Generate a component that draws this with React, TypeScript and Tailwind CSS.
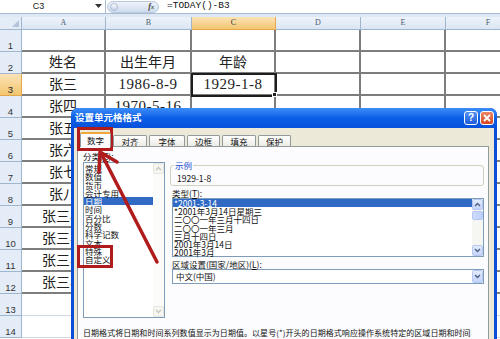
import React from 'react';

const colW = ['w-[84px]', 'w-[86px]', 'w-[84px]', 'w-[85px]', 'w-[85px]', 'w-[85px]'];
const colNames = ['A', 'B', 'C', 'D', 'E', 'F'];

const sheet: string[][] = [
    ['', '', ''],
    ['姓名', '出生年月', '年龄'],
    ['张三', '1986-8-9', '1929-1-8'],
    ['张四', '1970-5-16', ''],
    ['张五', '', ''],
    ['张六', '', ''],
    ['张七', '', ''],
    ['张八', '', ''],
    ['张三丰', '', ''],
    ['张三丰', '', ''],
    ['张三丰', '', ''],
    ['张三丰', '', ''],
    ['', '', ''],
    ['', '', ''],
];

const categories = ['常规', '数值', '货币', '会计专用', '日期', '时间', '百分比', '分数', '科学记数', '文本', '特殊', '自定义'];
const types = ['*2001-3-14', '*2001年3月14日星期三', '二〇〇一年三月十四日', '二〇〇一年三月', '三月十四日', '2001年3月14日', '2001年3月'];

export default function App() {
    return (
        <div className="relative w-[500px] h-[339px] overflow-hidden bg-white font-['Liberation_Sans','Noto_Sans_CJK_SC',sans-serif]">

            {/* --- FORMULA BAR --- */}
            <div className="h-[14px] flex items-center border-b border-[#a7bad4] bg-white">
                <div className="w-[106px] h-full flex items-center border-r border-[#a7bad4] relative">
                    <span className="flex-1 text-center text-[9px] text-[#222] pr-[18px]">C3</span>
                    <svg width="7" height="5" viewBox="0 0 7 5" className="mr-[3px]"><path d="M0 0 L7 0 L3.5 4 Z" fill="#333" /></svg>
                </div>
                <div className="w-[52px] h-[12px] mx-[1px] rounded-full bg-linear-to-b from-[#eef3fa] to-[#cfdcee] border border-[#b8c8de] flex items-center px-[2px]">
                    <div className="w-[8px] h-[8px] rounded-full bg-linear-to-b from-white to-[#c2d1e6] border border-[#aabcd6]" />
                    <span className="ml-auto mr-[2px] text-[8px] italic font-bold text-[#444] font-['Liberation_Serif',serif]">f<span className="text-[6px]">x</span></span>
                </div>
                <span className="ml-[7px] text-[9.5px] text-[#111] font-['Liberation_Mono',monospace]">=TODAY()-B3</span>
            </div>
            <div className="h-[3px] bg-[#dfe8f5]" />

            {/* --- COLUMN HEADERS --- */}
            <div className="flex h-[13px]">
                <div className="w-[22px] shrink-0 bg-[#e4ecf7] border-r border-b border-[#9eb6ce] relative">
                    <svg width="7" height="7" viewBox="0 0 7 7" className="absolute right-[2px] bottom-[2px]"><path d="M7 0 L7 7 L0 7 Z" fill="#b4c4d9" /></svg>
                </div>
                {colNames.map((c, i) => (
                    <div
                        key={c}
                        className={`${colW[i]} shrink-0 flex items-center justify-center text-[8px] font-['Liberation_Serif',serif] border-r border-b ${
                            c === 'C'
                                ? 'bg-linear-to-b from-[#fbe3b6] to-[#f3c56e] border-[#e3a84d] text-[#333]'
                                : 'bg-linear-to-b from-[#eef3fa] to-[#dbe5f3] border-[#9eb6ce] text-[#4b5b70]'
                        }`}
                    >
                        {c}
                    </div>
                ))}
            </div>

            {/* --- ROWS --- */}
            {sheet.map((row, r) => (
                <SheetRow key={r} n={r + 1} cells={row} />
            ))}

            {/* --- FORMAT CELLS DIALOG --- */}
            <div className="absolute left-[71px] top-[108px] w-[426px] h-[240px] rounded-t-[7px] bg-[#0b4fd6] flex flex-col font-['Noto_Sans_CJK_SC',sans-serif]">
                <div className="h-[20px] shrink-0 rounded-t-[7px] bg-linear-to-b from-[#3d8df8] via-[#0b5ee6] to-[#0751dc] flex items-center pl-[4px] pr-[3px]">
                    <span className="text-white font-bold text-[9.5px] leading-none">设置单元格格式</span>
                    <div className="ml-auto flex gap-[2px]">
                        <div className="w-[14px] h-[14px] rounded-[3px] border border-white bg-linear-to-b from-[#5592f6] to-[#1f5bd6] flex items-center justify-center text-white text-[10px] font-bold leading-none font-['Liberation_Sans',sans-serif]">?</div>
                        <div className="w-[14px] h-[14px] rounded-[3px] border border-white bg-linear-to-b from-[#ec8463] to-[#d4471f] flex items-center justify-center">
                            <svg width="8" height="8" viewBox="0 0 8 8"><path d="M1 1 L7 7 M7 1 L1 7" stroke="white" strokeWidth="1.8" /></svg>
                        </div>
                    </div>
                </div>

                <div className="flex-1 mx-[3px] bg-[#ece9d8] flex flex-col pt-[4px]">
                    {/* tabs */}
                    <div className="flex items-end gap-[2px] ml-[6px] h-[14px] relative z-10">
                        <div className="w-[31px] h-[15px] -mb-[1px] bg-[#fcfcfe] border-x border-[#919b9c] border-t-2 border-t-[#f2a73c] rounded-t-[2px] flex items-center justify-center text-[8.5px] text-[#111]">数字</div>
                        <Tab w="w-[34px]" label="对齐" />
                        <Tab w="w-[36px]" label="字体" />
                        <Tab w="w-[33px]" label="边框" />
                        <Tab w="w-[34px]" label="填充" />
                        <Tab w="w-[33px]" label="保护" />
                    </div>

                    {/* panel */}
                    <div className="flex-1 ml-[3px] mr-[5px] bg-[#fcfcfe] border border-[#919b9c] pt-[4px] pl-[5px] text-[8.5px] text-[#111]">
                        <div className="flex">
                            <div className="w-[82px] shrink-0">
                                <div className="h-[11px] leading-[11px]">分类(<span className="underline">C</span>):</div>
                                <div className="h-[156px] bg-white border border-[#7f9db9] flex">
                                    <div className="flex-1 pt-[1px]">
                                        {categories.map((c) => (
                                            <div
                                                key={c}
                                                className={`h-[8.3px] leading-[8.3px] pl-[1px] ${c === '日期' ? 'bg-[#316ac5] text-white' : ''}`}
                                            >
                                                {c}
                                            </div>
                                        ))}
                                    </div>
                                    <ScrollBar faded />
                                </div>
                            </div>

                            <div className="w-[314px] ml-[5px] shrink-0 pt-[14px]">
                                <div className="relative h-[21px] border border-[#d0d0bf] rounded-[3px] flex items-end pl-[6px] pb-[2px]">
                                    <span className="absolute -top-[6px] left-[3px] bg-[#fcfcfe] px-[1px] leading-[10px] text-[#1b4fd0]">示例</span>
                                    <span className="leading-[10px]">1929-1-8</span>
                                </div>
                                <div className="mt-[2px] ml-[2px] h-[10px] leading-[10px]">类型(<span className="underline">T</span>):</div>
                                <div className="ml-[2px] h-[59px] bg-white border border-[#7f9db9] flex">
                                    <div className="flex-1">
                                        {types.map((t, i) => (
                                            <div
                                                key={t}
                                                className={`h-[8.2px] leading-[8.2px] pl-[1px] ${i === 0 ? 'bg-[#316ac5] text-white' : ''}`}
                                            >
                                                {t}
                                            </div>
                                        ))}
                                    </div>
                                    <ScrollBar thumb />
                                </div>
                                <div className="mt-[2px] ml-[2px] h-[10px] leading-[10px]">区域设置(国家/地区)(<span className="underline">L</span>):</div>
                                <div className="ml-[2px] h-[15px] bg-white border border-[#7f9db9] flex items-center">
                                    <span className="flex-1 pl-[3px]">中文(中国)</span>
                                    <ArrowBtn dir="down" className="h-[13px]" />
                                </div>
                            </div>
                        </div>
                        <p className="mt-[10px] text-[8px] leading-[10px] whitespace-nowrap tracking-[0.05px]">
                            日期格式将日期和时间系列数值显示为日期值。以星号(*)开头的日期格式响应操作系统特定的区域日期和时间
                        </p>
                    </div>
                </div>
            </div>

            {/* --- RED ANNOTATIONS --- */}
            <div className="absolute left-[77px] top-[127px] w-[36px] h-[24px] border-[3px] border-[#b01b1b]" />
            <div className="absolute left-[77px] top-[245px] w-[36px] h-[23px] border-[3px] border-[#b01b1b]" />
            <svg className="absolute left-0 top-0 pointer-events-none" width="500" height="339" viewBox="0 0 500 339">
                <line x1="157" y1="262" x2="102" y2="155" stroke="#b01b1b" strokeWidth="3.5" strokeLinecap="round" />
                <polyline points="117,162 100,152 99,172" fill="none" stroke="#b01b1b" strokeWidth="3.5" strokeLinecap="round" strokeLinejoin="round" />
            </svg>
        </div>
    );
}

function SheetRow({ n, cells }: { n: number; cells: string[] }) {
    const framed = n <= 12;
    return (
        <div className="flex h-[22px]">
            <div
                className={`w-[22px] shrink-0 flex items-end justify-center pb-[1px] text-[9.5px] leading-none border-r border-b ${
                    n === 3
                        ? 'bg-linear-to-b from-[#fbe3b6] to-[#f3c56e] border-[#e3a84d] text-[#222]'
                        : 'bg-[#e4ecf7] border-[#9eb6ce] text-[#333]'
                }`}
            >
                {n}
            </div>
            {colW.map((w, i) => {
                const text = cells[i] ?? '';
                const isNum = /^[0-9]/.test(text);
                const selected = n === 3 && i === 2;
                return (
                    <div
                        key={i}
                        className={`${w} shrink-0 relative flex items-center justify-center overflow-visible whitespace-nowrap text-[#222] font-['Liberation_Serif','Noto_Sans_CJK_SC',serif] ${
                            framed ? 'border-r-2 border-b-2 border-[#7d7d7d]' : 'border-r border-b border-[#d0d7e5]'
                        } ${isNum ? 'text-[15px] tracking-[0.5px]' : 'text-[14px]'} ${selected ? 'outline-2 outline-[#1e1e1e] -outline-offset-1 z-[1]' : ''}`}
                    >
                        {text}
                        {selected && <div className="absolute -right-[3px] -bottom-[3px] w-[5px] h-[5px] bg-[#1e1e1e] border border-white" />}
                    </div>
                );
            })}
        </div>
    );
}

function Tab({ w, label }: { w: string; label: string }) {
    return (
        <div className={`${w} h-[11px] bg-linear-to-b from-white to-[#ecebe6] border-x border-t border-[#919b9c] rounded-t-[2px] flex items-center justify-center text-[8.5px] text-[#111]`}>
            {label}
        </div>
    );
}

function ArrowBtn({ dir, faded, className }: { dir: 'up' | 'down'; faded?: boolean; className?: string }) {
    return (
        <div
            className={`w-[11px] shrink-0 rounded-[2px] border flex items-center justify-center ${
                faded ? 'bg-[#f5f5f1] border-[#e6e6de]' : 'bg-linear-to-b from-[#e3ebfd] to-[#c3d4fb] border-[#b7c8f0]'
            } ${className ?? 'h-[11px]'}`}
        >
            <svg width="7" height="5" viewBox="0 0 7 5">
                <path
                    d={dir === 'up' ? 'M1 4 L3.5 1.5 L6 4' : 'M1 1 L3.5 3.5 L6 1'}
                    fill="none"
                    stroke={faded ? '#c9c9c0' : '#4d6185'}
                    strokeWidth="1.4"
                />
            </svg>
        </div>
    );
}

function ScrollBar({ faded, thumb }: { faded?: boolean; thumb?: boolean }) {
    return (
        <div className={`w-[11px] flex flex-col ${faded ? 'bg-[#fbfbf9]' : 'bg-[#f6f6f2]'}`}>
            <ArrowBtn dir="up" faded={faded} />
            {thumb && <div className="h-[9px] mt-[1px] rounded-[2px] bg-linear-to-r from-[#cfdcfb] to-[#bccefa] border border-[#b3c6f3]" />}
            <div className="flex-1" />
            <ArrowBtn dir="down" faded={faded} />
        </div>
    );
}
